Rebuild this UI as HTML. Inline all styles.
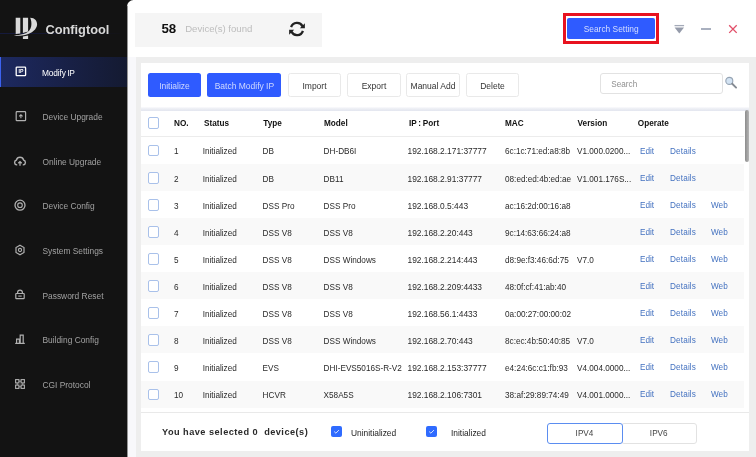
<!DOCTYPE html>
<html><head><meta charset="utf-8"><title>Configtool</title>
<style>
*{box-sizing:border-box;margin:0;padding:0}
html,body{width:756px;height:457px;overflow:hidden}
body{position:relative;will-change:transform;background:#131313;font-family:"Liberation Sans",sans-serif;font-size:8.2px;color:#2a2a2a}
.abs{position:absolute}
#side{position:absolute;left:0;top:0;width:128px;height:457px;background:#131313}
#hl{position:absolute;left:0;top:33px;width:120px;height:1px;background:linear-gradient(90deg,#151a3e,#131316)}
#brand{position:absolute;left:45.4px;top:21.5px;font-size:12.8px;font-weight:bold;color:#d8d8d8;letter-spacing:0;line-height:16px}
.si{position:absolute;left:0;width:128px;height:30px;color:#a2a2a2;font-size:8.4px;line-height:30px}
.si.act{background:linear-gradient(90deg,#1d2960 0%,#182045 55%,#141a31 100%);color:#fff;border-left:1.5px solid #3c62f0}
.si .ico{position:absolute;left:14.3px;top:8.1px;overflow:visible}
.si.act .ico{left:12.8px}
.si .sl{position:absolute;left:42.5px;top:0.7px;white-space:nowrap}
.si.act .sl{left:41px;word-spacing:-0.8px;letter-spacing:-0.15px}
#main{position:absolute;left:127px;top:0;width:629px;height:457px;background:#fff;border-top-left-radius:6.5px;overflow:hidden}
#strip{position:absolute;left:0;top:57px;width:8.5px;height:400px;background:#f8f8fb}
#content{position:absolute;left:8.5px;top:57px;width:621px;height:400px;background:#eeeeee}
#cntbox{position:absolute;left:7.9px;top:13px;width:187px;height:34px;background:#f5f5f5}
#n58{position:absolute;left:26.5px;top:8px;font-size:13.3px;font-weight:bold;color:#111;line-height:16px}
#found{position:absolute;left:50.3px;top:10px;font-size:9.6px;color:#bdbdbd;line-height:12px;white-space:nowrap}
#redbox{position:absolute;left:435.6px;top:12.6px;width:96.8px;height:31.3px;border:3.3px solid #e8121f}
#ssbtn{position:absolute;left:440px;top:18px;width:88.4px;height:21px;background:#2f5bff;border-radius:2px;color:#d5deff;font-size:8.4px;line-height:23px;text-align:center}
.btn{position:absolute;top:73.4px;height:24px;border-radius:2.5px;font-size:8.5px;line-height:24px;padding-top:1px;text-align:center;white-space:nowrap}
.btn.p{background:#2f5bff;color:#d0d9ff}
.btn.s{background:#fff;border:1px solid #e9e9e9;color:#333;line-height:22px}
#tcard{position:absolute;left:14px;top:63px;width:608px;height:45.5px;background:#fff}
#gap{position:absolute;left:14px;top:107px;width:608px;height:4px;background:linear-gradient(#fbfbfd 0%,#eceef4 45%,#e3e6ef 100%)}
#tbl{position:absolute;left:14px;top:111px;width:608px;height:339.5px;background:#fff}
#search{position:absolute;left:473px;top:73px;width:123px;height:21px;border:1px solid #e2e2e2;border-radius:3px;background:#fff;color:#8f8f8f;font-size:8.2px;line-height:21px;padding-left:10.3px}
.row{position:absolute;left:141px;width:603px;height:27.1px;line-height:27px}
.hdr{position:absolute;left:141px;top:111px;width:603px;height:26px;line-height:24px;font-weight:bold;color:#111;border-bottom:1px solid #ececec;background:#fff}
.c{position:absolute;top:1.45px;white-space:nowrap}
.cb{position:absolute;left:6.8px;top:8.1px;width:11.4px;height:11.4px;border:1.2px solid #a9c1ea;border-radius:2px;background:#fff}
.c-no{left:33px} .c-st{left:61.7px} .c-ty{left:121.6px} .c-mo{left:182.6px} .c-ip{left:266.5px;font-size:8.4px} .c-mac{left:364px} .c-ver{left:436px}
.c-ed{left:499px} .c-de{left:529px} .c-web{left:570px}
.lk{color:#4472c0;top:0.95px} .hdr .c{top:1.05px} .c-de{letter-spacing:0.15px}
#foot{position:absolute;left:141px;top:412px;width:608px;height:38.5px;border-top:1px solid #e9e9e9;background:#fff}
#sel{position:absolute;left:162px;top:426px;font-size:9.2px;font-weight:bold;color:#2a2a2a;letter-spacing:0.47px;white-space:pre;line-height:12px}
.chk{position:absolute;top:426px;width:11px;height:11px;background:#2f6bff;border-radius:2px}
.chk svg{position:absolute;left:0;top:0}
.fl{position:absolute;top:426.7px;font-size:8.4px;line-height:12px;color:#222;white-space:nowrap}
#ipv4{position:absolute;left:546.5px;top:423.3px;width:76px;height:21px;border:1px solid #5b8df0;border-radius:3px;background:#fff;text-align:center;line-height:20px;font-size:8.2px;color:#444;z-index:2}
#ipv6{position:absolute;left:621px;top:423.3px;width:75.5px;height:21px;border:1px solid #e2e2e2;border-radius:3px;background:#fff;text-align:center;line-height:20px;font-size:8.2px;color:#444}
#thumb{position:absolute;left:744.6px;top:109.8px;width:4.2px;height:52.4px;border-radius:2px;background:linear-gradient(90deg,#8c8c8c,#b5b5b5)}
</style></head><body>
<div id="side">
<div id="hl"></div>
<svg class="abs" style="left:0;top:0" width="60" height="50" viewBox="0 0 60 50">
<path d="M15.7 17.7H20.3V33.5L15.7 34Z" fill="#dadada"/>
<path d="M22.9 17.7H28.1V31.6L22.9 33Z" fill="#dadada"/>
<path d="M22.9 36.4L28.1 35.4V39H22.9Z" fill="#dadada"/>
<path d="M30.2 17.7C34.5 17.6 37.3 20.6 37.1 24.6C36.9 29.2 32.2 33.4 25 35.1C20.6 36.1 16.6 35.9 13.9 34.9C18 35.2 22 34.7 25.6 33.2C28.6 31.9 30.6 29.5 31.2 26.2C31.7 23.2 31.3 20.2 30.2 17.7Z" fill="#dadada"/>
</svg>
<div id="brand">Configtool</div>
<div class="si act" style="top:57.0px"><svg class="ico" width="12" height="12" viewBox="0 0 12 12"><rect x="2.2" y="2.1" width="9.4" height="8.6" rx="0.8" fill="none" stroke="#fff" stroke-width="1.3"/><text x="7" y="8.3" font-size="5.2" font-weight="bold" fill="#fff" text-anchor="middle" font-family="Liberation Sans, sans-serif">IP</text></svg><span class="sl" style="top:0.55px">Modify IP</span></div>
<div class="si" style="top:102.0px"><svg class="ico" width="12" height="12" viewBox="0 0 12 12"><rect x="2.2" y="1.7" width="9.4" height="9" rx="0.8" fill="none" stroke="#b0b0b0" stroke-width="1.2"/><path d="M6.9 8.2V4.8M5.2 6.4L6.9 4.7L8.6 6.4" fill="none" stroke="#b0b0b0" stroke-width="1.1"/></svg><span class="sl" style="top:-0.15px">Device Upgrade</span></div>
<div class="si" style="top:146.5px"><svg class="ico" width="12" height="12" viewBox="0 0 12 12"><g transform="translate(6 6) scale(1.15) translate(-6 -5.8)"><path d="M3.6 9.2H3.2A2.2 2.2 0 0 1 2.9 4.9A3.2 3.2 0 0 1 9.1 4.9A2.2 2.2 0 0 1 8.8 9.2H8.4" fill="none" stroke="#b0b0b0" stroke-width="1.2"/><path d="M6 10V6.4M4.5 7.8L6 6.3L7.5 7.8" fill="none" stroke="#b0b0b0" stroke-width="1.1"/></g></svg><span class="sl" style="top:0.40px">Online Upgrade</span></div>
<div class="si" style="top:191.0px"><svg class="ico" width="12" height="12" viewBox="0 0 12 12"><circle cx="6" cy="6.2" r="5" fill="none" stroke="#b0b0b0" stroke-width="1.3"/><circle cx="6" cy="6.2" r="2.3" fill="none" stroke="#b0b0b0" stroke-width="1.1"/></svg><span class="sl" style="top:0.25px">Device Config</span></div>
<div class="si" style="top:236.0px"><svg class="ico" width="12" height="12" viewBox="0 0 12 12"><path d="M6 1.3L10 3.6V8.4L6 10.7L2 8.4V3.6Z" fill="none" stroke="#b0b0b0" stroke-width="1.2"/><circle cx="6" cy="6" r="1.6" fill="none" stroke="#b0b0b0" stroke-width="1.1"/></svg><span class="sl" style="top:0.05px">System Settings</span></div>
<div class="si" style="top:280.5px"><svg class="ico" width="12" height="12" viewBox="0 0 12 12"><g transform="translate(0 -0.7)"><path d="M3.6 5.2V4.2A2.4 2.4 0 0 1 8.4 4.2V5.2" fill="none" stroke="#b0b0b0" stroke-width="1.2"/><rect x="1.8" y="5.2" width="8.4" height="5.2" rx="0.6" fill="none" stroke="#b0b0b0" stroke-width="1.2"/><path d="M4.3 7.8H7.7" stroke="#b0b0b0" stroke-width="1.1"/></g></svg><span class="sl" style="top:0.45px">Password Reset</span></div>
<div class="si" style="top:325.0px"><svg class="ico" width="12" height="12" viewBox="0 0 12 12"><path d="M1.2 10.4H10.8" stroke="#b0b0b0" stroke-width="1.2"/><path d="M2.6 10.4V6.2H5.4V10.4" fill="none" stroke="#b0b0b0" stroke-width="1.2"/><path d="M6.2 10.4V2.2H9.2V10.4" fill="none" stroke="#b0b0b0" stroke-width="1.2"/></svg><span class="sl" style="top:0.45px">Building Config</span></div>
<div class="si" style="top:370.0px"><svg class="ico" width="12" height="12" viewBox="0 0 12 12"><rect x="1.6" y="1.6" width="3.3" height="3.3" fill="none" stroke="#b0b0b0" stroke-width="1.1"/><rect x="7.1" y="1.6" width="3.3" height="3.3" fill="none" stroke="#b0b0b0" stroke-width="1.1"/><rect x="1.6" y="7.1" width="3.3" height="3.3" fill="none" stroke="#b0b0b0" stroke-width="1.1"/><rect x="7.1" y="7.1" width="3.3" height="3.3" fill="none" stroke="#b0b0b0" stroke-width="1.1"/><path d="M3.2 4.9V7.1M8.8 4.9V7.1M4.9 3.2H7.1M4.9 8.8H7.1" stroke="#b0b0b0" stroke-width="0.9"/></svg><span class="sl" style="top:-0.15px">CGI Protocol</span></div>
</div>
<div class="abs" style="left:127px;top:6px;width:1px;height:451px;background:#959595;z-index:5"></div>
<div id="main">
<div id="strip"></div>
<div id="content"></div>
<div id="cntbox"><span id="n58">58</span><span id="found">Device(s) found</span>
<svg class="abs" style="left:152.2px;top:6.4px" width="20" height="20" viewBox="0 0 20 20"><path d="M4.1 8.2A6.2 6.2 0 0 1 15.6 7.4" fill="none" stroke="#222" stroke-width="2.3"/><path d="M17.9 4.2V9.3H12.8Z" fill="#222"/><path d="M15.9 11.8A6.2 6.2 0 0 1 4.4 12.6" fill="none" stroke="#222" stroke-width="2.3"/><path d="M2.1 15.8V10.7H7.2Z" fill="#222"/></svg>
</div>
<div id="redbox"></div>
<div id="ssbtn">Search Setting</div>
<svg class="abs" style="left:545.5px;top:22.5px" width="14" height="12" viewBox="0 0 14 12"><path d="M1.5 2.6H11.1" stroke="#a4aab8" stroke-width="1.3"/><path d="M1.6 4.4H11L6.3 10.6Z" fill="#959baa"/></svg>
<div class="abs" style="left:574px;top:28px;width:9.5px;height:2px;background:#a9b0bf"></div>
<svg class="abs" style="left:600.5px;top:24px" width="10" height="10" viewBox="0 0 10 10"><path d="M1.2 1.3L8.7 8.9M8.7 1.3L1.2 8.9" stroke="#e2506a" stroke-width="1.35"/></svg>
<div id="tcard"></div><div id="gap"></div><div id="tbl"></div>
</div>
<div class="btn p" style="left:148px;width:53px">Initialize</div>
<div class="btn p" style="left:207.4px;width:74px">Batch Modify IP</div>
<div class="btn s" style="left:288px;width:53px">Import</div>
<div class="btn s" style="left:347px;width:54px">Export</div>
<div class="btn s" style="left:406px;width:54px">Manual Add</div>
<div class="btn s" style="left:466px;width:53px">Delete</div>
<div id="search" style="left:600px">Search</div>
<svg class="abs" style="left:724px;top:76px" width="15" height="15" viewBox="0 0 15 15"><circle cx="5.3" cy="4.9" r="3.5" fill="#d3e3f3" stroke="#95a3b3" stroke-width="1.1"/><path d="M8.2 7.8L12.1 11.6" stroke="#858b93" stroke-width="1.9" stroke-linecap="round"/></svg>
<div class="hdr"><span class="cb" style="top:6.4px"></span><span class="c c-no">NO.</span><span class="c c-st" style="left:63px">Status</span><span class="c c-ty" style="left:122.3px">Type</span><span class="c c-mo" style="left:183px">Model</span><span class="c c-ip" style="left:268px;font-size:8.2px;word-spacing:-0.55px">IP : Port</span><span class="c c-mac">MAC</span><span class="c c-ver" style="left:436.6px">Version</span><span class="c c-ed" style="left:496.8px">Operate</span></div>
<div class="row" style="top:137.0px;background:#ffffff"><span class="cb"></span><span class="c c-no">1</span><span class="c c-st">Initialized</span><span class="c c-ty">DB</span><span class="c c-mo">DH-DB6I</span><span class="c c-ip">192.168.2.171:37777</span><span class="c c-mac">6c:1c:71:ed:a8:8b</span><span class="c c-ver">V1.000.0200...</span><span class="c c-ed lk">Edit</span><span class="c c-de lk">Details</span></div>
<div class="row" style="top:164.1px;background:#f9f9f9"><span class="cb"></span><span class="c c-no">2</span><span class="c c-st">Initialized</span><span class="c c-ty">DB</span><span class="c c-mo">DB11</span><span class="c c-ip">192.168.2.91:37777</span><span class="c c-mac">08:ed:ed:4b:ed:ae</span><span class="c c-ver">V1.001.176S...</span><span class="c c-ed lk">Edit</span><span class="c c-de lk">Details</span></div>
<div class="row" style="top:191.1px;background:#ffffff"><span class="cb"></span><span class="c c-no">3</span><span class="c c-st">Initialized</span><span class="c c-ty">DSS Pro</span><span class="c c-mo">DSS Pro</span><span class="c c-ip">192.168.0.5:443</span><span class="c c-mac">ac:16:2d:00:16:a8</span><span class="c c-ver"></span><span class="c c-ed lk">Edit</span><span class="c c-de lk">Details</span><span class="c c-web lk">Web</span></div>
<div class="row" style="top:218.2px;background:#f9f9f9"><span class="cb"></span><span class="c c-no">4</span><span class="c c-st">Initialized</span><span class="c c-ty">DSS V8</span><span class="c c-mo">DSS V8</span><span class="c c-ip">192.168.2.20:443</span><span class="c c-mac">9c:14:63:66:24:a8</span><span class="c c-ver"></span><span class="c c-ed lk">Edit</span><span class="c c-de lk">Details</span><span class="c c-web lk">Web</span></div>
<div class="row" style="top:245.2px;background:#ffffff"><span class="cb"></span><span class="c c-no">5</span><span class="c c-st">Initialized</span><span class="c c-ty">DSS V8</span><span class="c c-mo">DSS Windows</span><span class="c c-ip">192.168.2.214:443</span><span class="c c-mac">d8:9e:f3:46:6d:75</span><span class="c c-ver">V7.0</span><span class="c c-ed lk">Edit</span><span class="c c-de lk">Details</span><span class="c c-web lk">Web</span></div>
<div class="row" style="top:272.2px;background:#f9f9f9"><span class="cb"></span><span class="c c-no">6</span><span class="c c-st">Initialized</span><span class="c c-ty">DSS V8</span><span class="c c-mo">DSS V8</span><span class="c c-ip">192.168.2.209:4433</span><span class="c c-mac">48:0f:cf:41:ab:40</span><span class="c c-ver"></span><span class="c c-ed lk">Edit</span><span class="c c-de lk">Details</span><span class="c c-web lk">Web</span></div>
<div class="row" style="top:299.3px;background:#ffffff"><span class="cb"></span><span class="c c-no">7</span><span class="c c-st">Initialized</span><span class="c c-ty">DSS V8</span><span class="c c-mo">DSS V8</span><span class="c c-ip">192.168.56.1:4433</span><span class="c c-mac">0a:00:27:00:00:02</span><span class="c c-ver"></span><span class="c c-ed lk">Edit</span><span class="c c-de lk">Details</span><span class="c c-web lk">Web</span></div>
<div class="row" style="top:326.4px;background:#f9f9f9"><span class="cb"></span><span class="c c-no">8</span><span class="c c-st">Initialized</span><span class="c c-ty">DSS V8</span><span class="c c-mo">DSS Windows</span><span class="c c-ip">192.168.2.70:443</span><span class="c c-mac">8c:ec:4b:50:40:85</span><span class="c c-ver">V7.0</span><span class="c c-ed lk">Edit</span><span class="c c-de lk">Details</span><span class="c c-web lk">Web</span></div>
<div class="row" style="top:353.4px;background:#ffffff"><span class="cb"></span><span class="c c-no">9</span><span class="c c-st">Initialized</span><span class="c c-ty">EVS</span><span class="c c-mo">DHI-EVS5016S-R-V2</span><span class="c c-ip">192.168.2.153:37777</span><span class="c c-mac">e4:24:6c:c1:fb:93</span><span class="c c-ver">V4.004.0000...</span><span class="c c-ed lk">Edit</span><span class="c c-de lk">Details</span><span class="c c-web lk">Web</span></div>
<div class="row" style="top:380.5px;background:#f9f9f9"><span class="cb"></span><span class="c c-no">10</span><span class="c c-st">Initialized</span><span class="c c-ty">HCVR</span><span class="c c-mo">X58A5S</span><span class="c c-ip">192.168.2.106:7301</span><span class="c c-mac">38:af:29:89:74:49</span><span class="c c-ver">V4.001.0000...</span><span class="c c-ed lk">Edit</span><span class="c c-de lk">Details</span><span class="c c-web lk">Web</span></div>
<div id="thumb"></div>
<div id="foot"></div>
<div id="sel">You have selected 0  device(s)</div>
<div class="chk" style="left:330.5px"><svg width="11" height="11" viewBox="0 0 11 11"><path d="M3.2 5.6L4.9 7.2L7.9 4.1" fill="none" stroke="#e8efff" stroke-width="0.9"/></svg></div>
<div class="fl" style="left:351px">Uninitialized</div>
<div class="chk" style="left:425.5px"><svg width="11" height="11" viewBox="0 0 11 11"><path d="M3.2 5.6L4.9 7.2L7.9 4.1" fill="none" stroke="#e8efff" stroke-width="0.9"/></svg></div>
<div class="fl" style="left:451px">Initialized</div>
<div id="ipv6">IPV6</div>
<div id="ipv4">IPV4</div>
</body></html>
